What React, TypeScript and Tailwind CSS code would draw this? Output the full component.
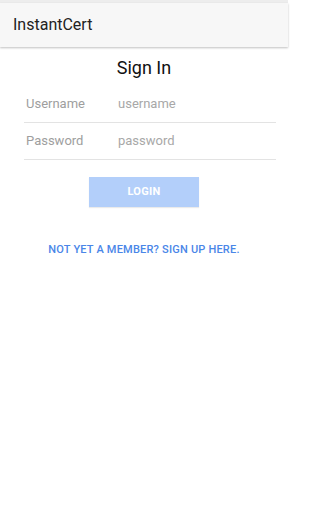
export default function App() {
  return (
    <div
      className="min-h-[512px] w-[288px] bg-white"
      style={{ fontFamily: "Roboto, 'Liberation Sans', sans-serif" }}
    >
      <div className="h-[3px] bg-[#ededed]" />
      <header className="flex h-[44px] items-center bg-[#f7f7f7] pl-[13px] shadow-[0_1px_2px_rgba(0,0,0,0.25)]">
        <h1 className="text-[16px] text-[#222]">InstantCert</h1>
      </header>

      <main className="px-[24px]">
        <h2 className="mt-[9px] text-center text-[18px] leading-[24px] text-[#111]">
          Sign In
        </h2>

        {/* the field rows run a bit wider on the right than the centred content */}
        <div className="mr-[-12px] mt-[6px]">
          <FieldRow label="Username" placeholder="username" />
          <FieldRow label="Password" placeholder="password" type="password" />
        </div>

        <div className="mt-[17px] flex justify-center">
          <button className="h-[30px] w-[110px] bg-[#b3cffa] text-[11px] font-bold tracking-wide text-white shadow-[0_1px_1px_rgba(0,0,0,0.08)]">
            LOGIN
          </button>
        </div>

        <p className="mt-[35px] text-center text-[11px] font-medium tracking-[0.2px] text-[#4a86e8]">
          NOT YET A MEMBER? SIGN UP HERE.
        </p>
      </main>
    </div>
  );
}

function FieldRow({
  label,
  placeholder,
  type = "text",
}: {
  label: string;
  placeholder: string;
  type?: string;
}) {
  return (
    <div className="flex h-[37px] items-center border-b border-[#e3e3e3]">
      <span className="w-[94px] pl-[2px] text-[13px] text-[#9e9e9e]">{label}</span>
      <input
        type={type}
        placeholder={placeholder}
        className="min-w-0 flex-1 bg-transparent text-[13px] text-[#333] outline-none placeholder:text-[#a8a8a8]"
      />
    </div>
  );
}
